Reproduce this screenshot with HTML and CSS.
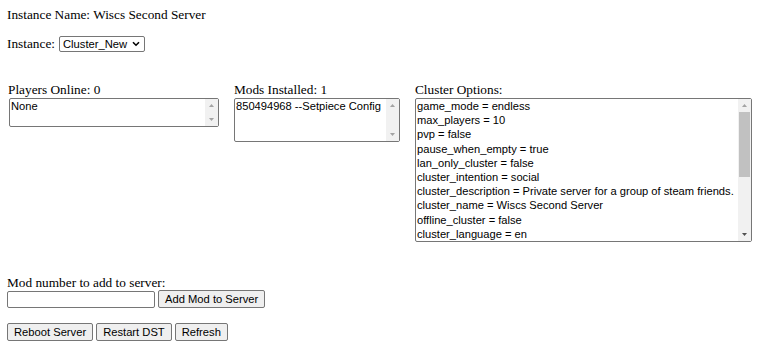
FILE: index.html
```html
<!DOCTYPE html>
<html>
<head>
<meta charset="utf-8">
<link rel="stylesheet" href="styles.css">
</head>
<body>
<p class="line title">Instance Name: Wiscs Second Server</p>
<p class="line instance">Instance: <span class="selwrap"><select class="sel"><option>Cluster_New</option></select><svg class="chev" width="8" height="6" viewBox="0 0 8 6"><path d="M1 1.2 L4 4.2 L7 1.2" fill="none" stroke="#000" stroke-width="1.6"/></svg></span></p>
<div class="cols">
  <div class="col col1">
    <div class="label">Players Online: 0</div>
    <div class="tawrap players">
      <textarea class="box" wrap="off" readonly>None</textarea>
      <div class="sb">
        <div class="sbbtn"><svg width="5" height="3" viewBox="0 0 5 3"><path d="M0 3 L2.5 0 L5 3 Z" fill="#a3a3a3"/></svg></div>
        <div class="sbtrack"></div>
        <div class="sbbtn"><svg width="5" height="3" viewBox="0 0 5 3"><path d="M0 0 L2.5 3 L5 0 Z" fill="#a3a3a3"/></svg></div>
      </div>
    </div>
  </div>
  <div class="col col2">
    <div class="label">Mods Installed: 1</div>
    <div class="tawrap mods">
      <textarea class="box" wrap="off" readonly>850494968 --Setpiece Config</textarea>
      <div class="sb">
        <div class="sbbtn"><svg width="5" height="3" viewBox="0 0 5 3"><path d="M0 3 L2.5 0 L5 3 Z" fill="#a3a3a3"/></svg></div>
        <div class="sbtrack"></div>
        <div class="sbbtn"><svg width="5" height="3" viewBox="0 0 5 3"><path d="M0 0 L2.5 3 L5 0 Z" fill="#a3a3a3"/></svg></div>
      </div>
    </div>
  </div>
  <div class="col col3">
    <div class="label">Cluster Options:</div>
    <div class="tawrap cluster">
      <textarea class="box" wrap="off" readonly>game_mode = endless
max_players = 10
pvp = false
pause_when_empty = true
lan_only_cluster = false
cluster_intention = social
cluster_description = Private server for a group of steam friends.
cluster_name = Wiscs Second Server
offline_cluster = false
cluster_language = en
whitelist_slots = 0
autosaver_enabled = true
console_enabled = true
shard_enabled = true
bind_ip = 127.0.0.1
master_ip = 127.0.0.1
master_port = 10889
cluster_key = defaultPass</textarea>
      <div class="sb">
        <div class="sbbtn"><svg width="5" height="3" viewBox="0 0 5 3"><path d="M0 3 L2.5 0 L5 3 Z" fill="#a3a3a3"/></svg></div>
        <div class="sbtrack"><div class="thumb"></div></div>
        <div class="sbbtn"><svg width="5" height="3" viewBox="0 0 5 3"><path d="M0 0 L2.5 3 L5 0 Z" fill="#505050"/></svg></div>
      </div>
    </div>
  </div>
</div>
<div class="addmod">
  <div class="label">Mod number to add to server:</div>
  <div class="row">
    <input class="inp" type="text">
    <button class="btn">Add Mod to Server</button>
  </div>
</div>
<div class="row actions">
  <button class="btn">Reboot Server</button>
  <button class="btn">Restart DST</button>
  <button class="btn">Refresh</button>
</div>
</body>
</html>
```

FILE: styles.css
```css
html, body {
  margin: 0;
  background: #fff;
}
body {
  padding: 7px 7px 0 7px;
  font-family: "Liberation Serif", "Times New Roman", serif;
  font-size: 13.3px;
  line-height: 15px;
  color: #000;
}
.line {
  margin: 0;
}
.instance {
  margin-top: 13px;
  display: flex;
  align-items: center;
  gap: 4px;
  height: 17px;
}
.selwrap {
  position: relative;
  display: inline-flex;
}
.sel {
  -webkit-appearance: none;
  appearance: none;
  box-sizing: border-box;
  font-family: "Liberation Sans", Arial, sans-serif;
  font-size: 11.2px;
  height: 16px;
  width: 86px;
  padding: 0 0 0 3px;
  border: 1px solid #767676;
  border-radius: 2px;
  background: #fff;
  color: #000;
  outline: none;
}
.chev {
  position: absolute;
  right: 5px;
  top: 5px;
  pointer-events: none;
}
.cols {
  display: flex;
  margin-top: 30px;
}
.col {
  display: flex;
  flex-direction: column;
  align-items: flex-start;
}
.col1 { width: 227px; padding-left: 1px; box-sizing: border-box; }
.col2 { width: 181px; }
.col3 { flex: 1; }
.label {
  height: 16px;
}
.tawrap {
  position: relative;
  display: flex;
}
.box {
  box-sizing: border-box;
  width: 100%;
  height: 100%;
  margin: 0;
  border: 1px solid #767676;
  border-radius: 2px;
  padding: 0 14px 0 1px;
  font-family: "Liberation Sans", Arial, sans-serif;
  font-size: 11.15px;
  line-height: 14.2px;
  color: #000;
  background: #fff;
  resize: none;
  overflow: hidden;
  white-space: pre;
  outline: none;
}
.sb {
  position: absolute;
  top: 1px;
  right: 1px;
  bottom: 1px;
  width: 13px;
  background: #f1f1f1;
  display: flex;
  flex-direction: column;
}
.sbbtn {
  height: 13px;
  flex: none;
  display: flex;
  align-items: center;
  justify-content: center;
}
.sbtrack {
  flex: 1;
  padding: 0 1px;
}
.thumb {
  height: 65px;
  background: #c1c1c1;
}
.players { width: 210px; height: 29px; margin-left: 1px; }
.mods { width: 166px; height: 44px; }
.cluster { width: 337px; height: 144px; }
.addmod {
  margin-top: 33px;
}
.addmod .label { height: 15px; }
.row {
  display: flex;
  align-items: center;
  gap: 3px;
}
.inp {
  box-sizing: border-box;
  width: 148px;
  height: 17px;
  margin: 0;
  border: 1px solid #767676;
  border-radius: 2px;
  padding: 0 2px;
  font-family: "Liberation Sans", Arial, sans-serif;
  font-size: 11.2px;
}
.btn {
  box-sizing: border-box;
  height: 18px;
  margin: 0;
  padding: 0 6px;
  border: 1px solid #767676;
  border-radius: 2px;
  background: #efefef;
  color: #000;
  font-family: "Liberation Sans", Arial, sans-serif;
  font-size: 11.2px;
  line-height: 16px;
}
.actions {
  margin-top: 15px;
  gap: 3px;
}
```
